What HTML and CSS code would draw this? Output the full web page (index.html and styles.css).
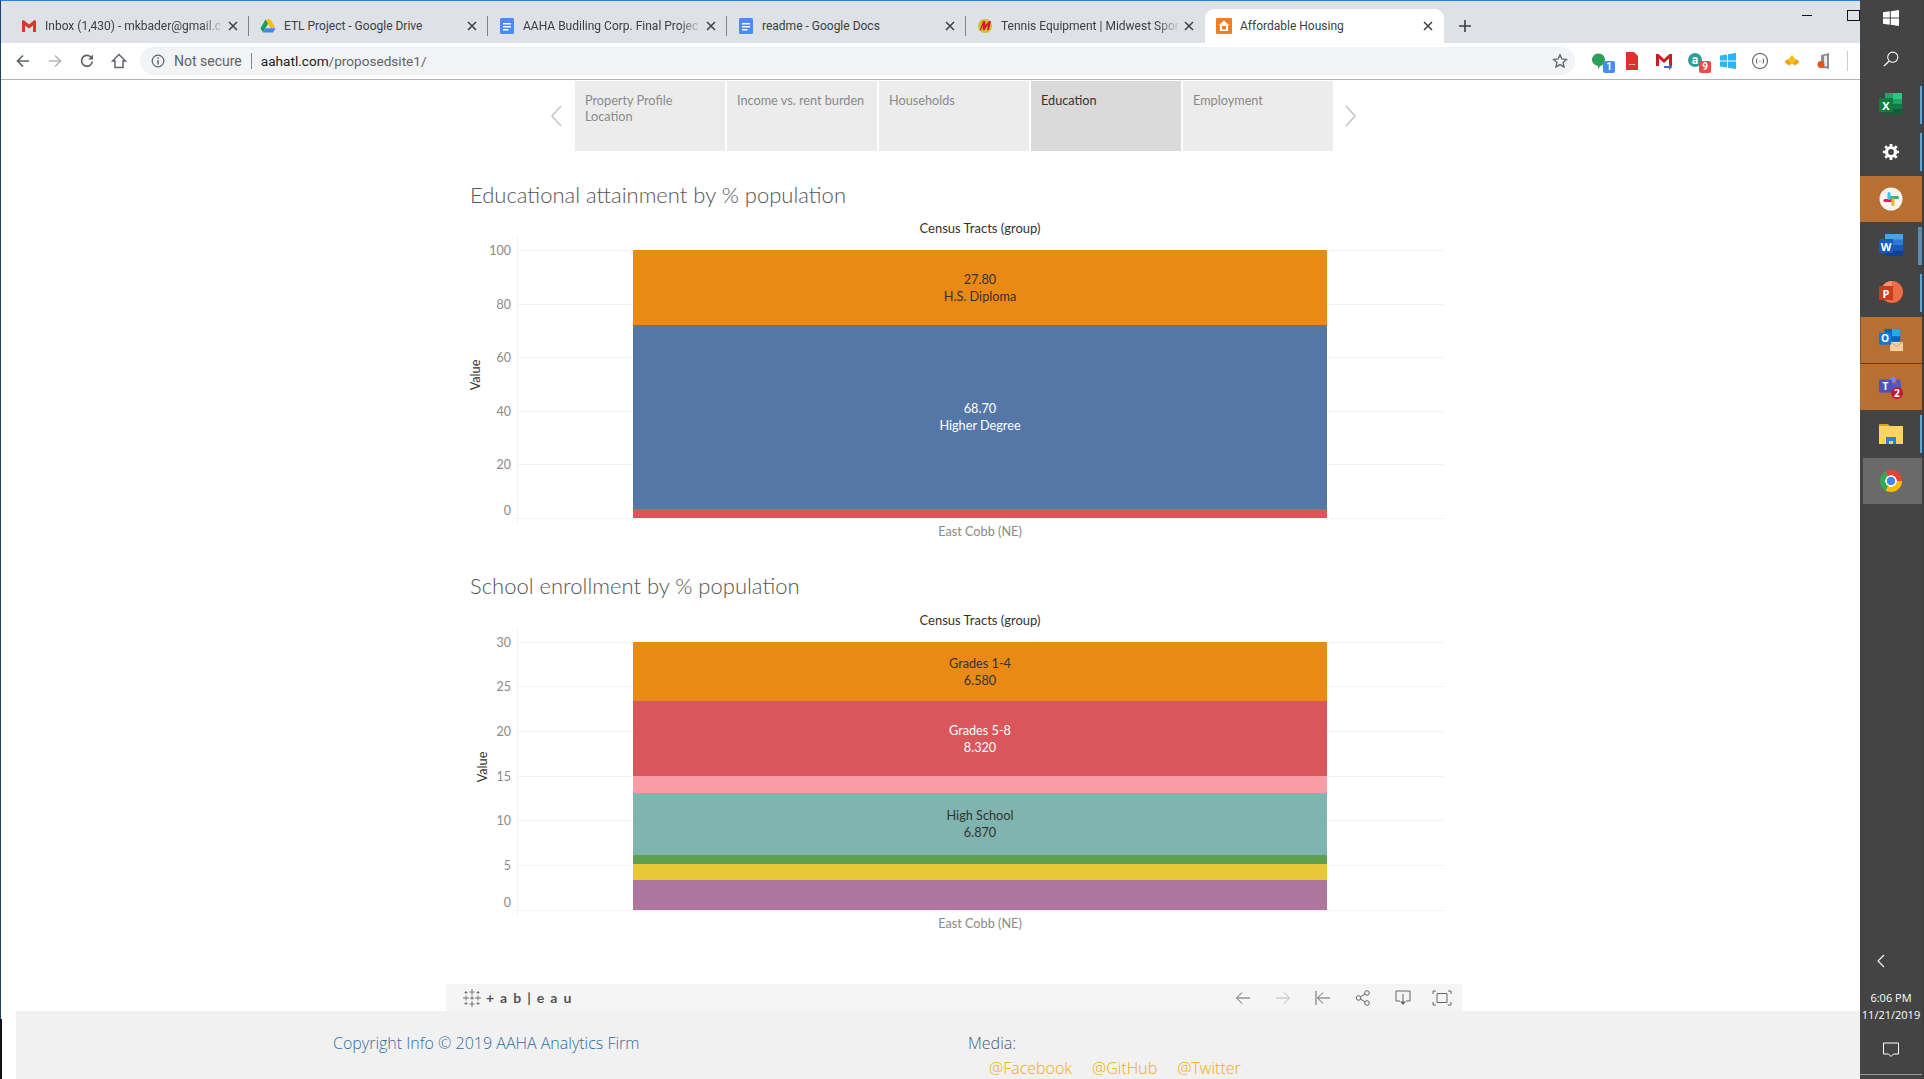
FILE: index.html
```html
<!DOCTYPE html>
<html lang="en">
<head>
    <meta charset="UTF-8">
    <title>Affordable Housing</title>
    <link rel="stylesheet" href="styles.css">
</head>
<body>
<svg class="defs" width="0" height="0">
    <symbol id="x" viewBox="0 0 10 10"><path d="M1 1l8 8M9 1l-8 8" stroke="#3c4043" stroke-width="1.5" fill="none"/></symbol>
    <symbol id="doc" viewBox="0 0 16 16"><rect x="1" width="14" height="16" rx="1.5" fill="#4c8bf5"/><path d="M4 5h8v1.500H4zM4 8h8v1.500H4zM4 11h5.500v1.500H4z" fill="#fff"/></symbol>
</svg>
<div class="screen">
    <div class="browser">
        <!-- tab strip -->
        <div class="tabstrip">
            <div class="tab">
                <svg class="favicon" viewBox="0 0 16 16"><path d="M1 3v11h3V7.500l4 3 4-3V14h3V3l-1.500-1L8 6.500 2.500 2z" fill="#d3392c"/></svg>
                <span class="tab-title tab-fade">Inbox (1,430) - mkbader@gmail.c</span>
                <svg class="tab-x"><use href="#x"/></svg>
            </div>
            <div class="tab">
                <svg class="favicon" viewBox="0 0 16 16"><path d="M5.500 1.500h5l5 8.700h-5z" fill="#fbbc04"/><path d="M5.500 1.500L.5 10.200 3 14.500l5-8.700z" fill="#1a9d5a"/><path d="M3 14.500h10l2.500-4.300h-10z" fill="#4285f4"/></svg>
                <span class="tab-title">ETL Project - Google Drive</span>
                <svg class="tab-x"><use href="#x"/></svg>
            </div>
            <div class="tab">
                <svg class="favicon"><use href="#doc"/></svg>
                <span class="tab-title tab-fade">AAHA Budiling Corp. Final Projec</span>
                <svg class="tab-x"><use href="#x"/></svg>
            </div>
            <div class="tab">
                <svg class="favicon"><use href="#doc"/></svg>
                <span class="tab-title">readme - Google Docs</span>
                <svg class="tab-x"><use href="#x"/></svg>
            </div>
            <div class="tab tab-last">
                <svg class="favicon" viewBox="0 0 16 16"><circle cx="8" cy="8" r="7" fill="#c9c22a"/><path d="M2.500 13L6 3h2l.5 4L12 3h2l-2 9h-2l1-5-3.500 5H6l-.5-4-1.500 4z" fill="#d9172e"/></svg>
                <span class="tab-title tab-fade">Tennis Equipment | Midwest Spor</span>
                <svg class="tab-x"><use href="#x"/></svg>
            </div>
            <div class="tab tab-active">
                <svg class="favicon" viewBox="0 0 16 16"><rect width="16" height="16" rx="1" fill="#f57c1f"/><path d="M8 2.500L2.500 7.500H4V13h8V7.500h1.500z" fill="#fff"/><path d="M6 8h4v3.500H6z" fill="#f57c1f"/></svg>
                <span class="tab-title">Affordable Housing</span>
                <svg class="tab-x"><use href="#x"/></svg>
            </div>
            <svg class="new-tab" viewBox="0 0 12 12"><path d="M6 0v12M0 6h12" stroke="#3c4043" stroke-width="1.600"/></svg>
            <div class="window-btns">
                <span class="win-min"></span>
                <span class="win-max"></span>
            </div>
        </div>

        <!-- toolbar -->
        <div class="toolbar">
            <svg class="nav-btn" viewBox="0 0 16 16"><path d="M14 8H3M8 2.500L2.500 8 8 13.500" stroke="#5f6368" stroke-width="1.700" fill="none"/></svg>
            <svg class="nav-btn" viewBox="0 0 16 16"><path d="M2 8h11M8 2.500L13.500 8 8 13.500" stroke="#b4b7ba" stroke-width="1.700" fill="none"/></svg>
            <svg class="nav-btn" viewBox="0 0 16 16"><path d="M13.300 8.500A5.400 5.400 0 1 1 11.800 4" stroke="#5f6368" stroke-width="1.700" fill="none"/><path d="M14 1.500V6.500H9z" fill="#5f6368"/></svg>
            <svg class="nav-btn" viewBox="0 0 16 16"><path d="M8 1.500L1.500 8H4v6.500h8V8h2.500z" stroke="#5f6368" stroke-width="1.500" fill="none"/></svg>
            <div class="omnibox">
                <svg class="info-icon" viewBox="0 0 14 14"><circle cx="7" cy="7" r="5.800" stroke="#5f6368" stroke-width="1.200" fill="none"/><path d="M6.300 6h1.400v4.500H6.300zM6.300 3.500h1.400v1.400H6.300z" fill="#5f6368"/></svg>
                <span class="not-secure">Not secure</span>
                <span class="omni-sep"></span>
                <span class="url">aahatl.com<span class="url-path">/proposedsite1/</span></span>
                <svg class="star" viewBox="0 0 16 16"><path d="M8 1.800l1.900 4.100 4.500.5-3.300 3 .9 4.500L8 11.600l-4 2.300.9-4.500-3.300-3 4.500-.5z" stroke="#5f6368" stroke-width="1.300" fill="none"/></svg>
            </div>
            <div class="extensions">
                <div class="ext">
                    <svg viewBox="0 0 18 18"><path d="M1 8a6.500 6.500 0 1 1 8 6.300L7 17v-3A6.500 6.500 0 0 1 1 8z" fill="#2e9e5b"/></svg>
                    <span class="badge badge-blue">1</span>
                </div>
                <div class="ext">
                    <svg viewBox="0 0 18 18"><path d="M3 0h8l4 4v14H3z" fill="#e02f2f"/><path d="M6 12h6v1H6z" fill="#f6b6b6"/></svg>
                </div>
                <div class="ext">
                    <svg viewBox="0 0 18 18"><path d="M1 2h16v12H1z" fill="#fff"/><path d="M1 2h2.500L9 7l5.500-5H17v12h-3V6.500L9 11 4 6.500V14H1z" fill="#c91c22"/><path d="M9 14h5v-2l3.500 3-3.500 3v-2H9z" fill="#3d6ec9"/></svg>
                </div>
                <div class="ext">
                    <svg viewBox="0 0 18 18"><circle cx="8" cy="8" r="7" fill="#2aa198"/><text x="8" y="12" class="ext-letter">a</text></svg>
                    <span class="badge badge-red">9</span>
                </div>
                <div class="ext">
                    <svg viewBox="0 0 18 18"><path d="M1 3.500l7-1V8.500H1zM9 2.300l8-1.200V8.500H9zM1 9.500h7v6l-7-1zM9 9.500h8V17l-8-1.200z" fill="#29b6f2"/></svg>
                </div>
                <div class="ext">
                    <svg viewBox="0 0 18 18"><circle cx="9" cy="9" r="7.500" stroke="#5f6368" stroke-width="1.100" fill="none"/><path d="M6 6.500Q4.800 9 6 11.500M12 6.500q1.200 2.500 0 5" stroke="#5f6368" fill="none"/><path d="M8 9h.8v.8H8zM9.600 9h.8v.8h-.8z" fill="#5f6368"/></svg>
                </div>
                <div class="ext">
                    <svg viewBox="0 0 18 18"><path d="M9 3l4 5-4 5-4-5z" fill="#f4c20d"/><path d="M4.500 7L8 11.500l-2 2L1.500 10zM13.500 7L10 11.500l2 2 4.500-3.500z" fill="#f39c12"/></svg>
                </div>
                <div class="ext">
                    <svg viewBox="0 0 18 18"><path d="M6 3l8-2v16l-8-1.500z" fill="#8a8f94"/><path d="M9 4l3-.6v11l-3-.4z" fill="#e8e8e8"/><circle cx="6" cy="12.500" r="3.500" fill="#f0500f"/></svg>
                </div>
            </div>
            <span class="toolbar-sep"></span>
        </div>

        <!-- page -->
        <div class="page">
            <span class="page-edge"></span>
            <div class="story-nav">
                <svg class="story-arrow story-prev" viewBox="0 0 14 24"><path d="M12 2L3 12l9 10" stroke="#c4c4c4" stroke-width="1.500" fill="none"/></svg>
                <div class="story-point">Property Profile<br>Location</div>
                <div class="story-point">Income vs. rent burden</div>
                <div class="story-point">Households</div>
                <div class="story-point story-current">Education</div>
                <div class="story-point">Employment</div>
                <svg class="story-arrow story-next" viewBox="0 0 14 24"><path d="M2 2l9 10-9 10" stroke="#c4c4c4" stroke-width="1.500" fill="none"/></svg>
            </div>

            <section class="chart">
                <h2 class="chart-title">Educational attainment by % population</h2>
                <div class="chart-head">Census Tracts (group)</div>
                <div class="plot">
                    <span class="axis-name">Value</span>
                    <div class="tick" style="top:13px"><span>100</span></div>
                    <div class="tick" style="top:67px"><span>80</span></div>
                    <div class="tick" style="top:120px"><span>60</span></div>
                    <div class="tick" style="top:174px"><span>40</span></div>
                    <div class="tick" style="top:227px"><span>20</span></div>
                    <div class="tick tick-zero" style="top:281px"><span>0</span></div>
                    <div class="stack">
                        <div class="seg seg-orange" style="height:75px"><span>27.80<br>H.S. Diploma</span></div>
                        <div class="seg seg-blue" style="height:184px"><span>68.70<br>Higher Degree</span></div>
                        <div class="seg seg-red" style="height:9px"></div>
                    </div>
                </div>
                <div class="chart-foot">East Cobb (NE)</div>
            </section>

            <section class="chart chart-second">
                <h2 class="chart-title">School enrollment by % population</h2>
                <div class="chart-head">Census Tracts (group)</div>
                <div class="plot">
                    <span class="axis-name axis-name-near">Value</span>
                    <div class="tick" style="top:13px"><span>30</span></div>
                    <div class="tick" style="top:57px"><span>25</span></div>
                    <div class="tick" style="top:102px"><span>20</span></div>
                    <div class="tick" style="top:147px"><span>15</span></div>
                    <div class="tick" style="top:191px"><span>10</span></div>
                    <div class="tick" style="top:236px"><span>5</span></div>
                    <div class="tick tick-zero" style="top:281px"><span>0</span></div>
                    <div class="stack">
                        <div class="seg seg-orange" style="height:59px"><span>Grades 1-4<br>6.580</span></div>
                        <div class="seg seg-red" style="height:75px"><span>Grades 5-8<br>8.320</span></div>
                        <div class="seg seg-pink" style="height:17px"></div>
                        <div class="seg seg-teal" style="height:62px"><span>High School<br>6.870</span></div>
                        <div class="seg seg-green" style="height:9px"></div>
                        <div class="seg seg-yellow" style="height:16px"></div>
                        <div class="seg seg-purple" style="height:30px"></div>
                    </div>
                </div>
                <div class="chart-foot">East Cobb (NE)</div>
            </section>

            <div class="viz-toolbar">
                <svg class="tableau-mark" viewBox="0 0 20 20"><path d="M10 1v6M7.500 4h5M10 13v6M7.500 16h5M1 10h6M4 7.500v5M13 10h6M16 7.500v5M4 3v3M2.500 4.500h3M16 3v3M14.500 4.500h3M4 14v3M2.500 15.500h3M16 14v3M14.500 15.500h3M10 8v4M8 10h4" stroke="#777" fill="none"/></svg>
                <span class="tableau-word">+ab|eau</span>
                <div class="viz-tools">
                    <svg viewBox="0 0 16 14"><path d="M15 7H2M7 1.500L1.500 7 7 12.500" stroke="#666" fill="none"/></svg>
                    <svg viewBox="0 0 16 14"><path d="M1 7h13M9 1.500L14.500 7 9 12.500" stroke="#bbb" fill="none"/></svg>
                    <svg viewBox="0 0 16 14"><path d="M1 0v14M15 7H3M8 1.500L2.500 7 8 12.500" stroke="#666" fill="none"/></svg>
                    <svg viewBox="0 0 16 16"><circle cx="3.500" cy="8" r="2.300" stroke="#666" fill="none"/><circle cx="12" cy="3" r="2.300" stroke="#666" fill="none"/><circle cx="12" cy="13" r="2.300" stroke="#666" fill="none"/><path d="M5.500 6.800l4.500-2.600M5.500 9.200l4.500 2.600" stroke="#666"/></svg>
                    <svg viewBox="0 0 16 16"><path d="M5 11H1V1h14v10h-4M8 4v8" stroke="#666" fill="none"/><path d="M5 11.500h6L8 15z" fill="#666"/></svg>
                    <svg viewBox="0 0 20 16"><path d="M5 3.500h10v9H5z" stroke="#666" fill="none"/><path d="M1 4V1h3M16 1h3v3M19 12v3h-3M4 15H1v-3" stroke="#666" fill="none"/></svg>
                </div>
            </div>

            <footer class="site-footer">
                <div class="copyright">Copyright Info © 2019 AAHA Analytics Firm</div>
                <div class="media">
                    <div class="media-label">Media:</div>
                    <div class="media-links">
                        <a>@Facebook</a>
                        <a>@GitHub</a>
                        <a>@Twitter</a>
                    </div>
                </div>
            </footer>
        </div>
    </div>

    <!-- windows taskbar -->
    <aside class="taskbar">
        <div class="task task-start">
            <svg viewBox="0 0 16 16"><path d="M0 2.300l6.800-1V7.500H0zM7.800 1.200L16 0v7.500H7.800zM0 8.500h6.800v6.200L0 13.700zM7.800 8.500H16V16l-8.200-1.200z" fill="#fff"/></svg>
        </div>
        <div class="task task-search">
            <svg viewBox="0 0 18 18"><circle cx="11" cy="7" r="5.700" stroke="#fff" stroke-width="1.200" fill="none"/><path d="M7 11.200L1 17" stroke="#fff" stroke-width="1.400"/></svg>
        </div>
        <div class="task running">
            <svg viewBox="0 0 24 24"><path d="M6 0h17v22H6z" fill="#21a366"/><path d="M14 0h9v6h-9z" fill="#33c481"/><path d="M14 11h9v6h-9z" fill="#107c41"/><path d="M6 16h17v6H6z" fill="#185c37"/><rect y="5" width="14" height="14" fill="#107c41"/><text x="7" y="16.500" class="office-letter">X</text></svg>
        </div>
        <div class="task running">
            <svg class="task-gear" viewBox="0 0 20 20"><circle cx="10" cy="10" r="5" stroke="#fff" stroke-width="3.600" fill="none"/><path d="M10 1v18M1 10h18M3.600 3.600l12.800 12.800M16.400 3.600L3.600 16.400" stroke="#fff" stroke-width="3" stroke-dasharray="3 12 3"/></svg>
        </div>
        <div class="task task-hot">
            <svg viewBox="0 0 24 24"><circle cx="12" cy="12" r="11.500" fill="#f7f3ee"/><path d="M6 13.500h6" stroke="#e01e5a" stroke-width="3" stroke-linecap="round"/><path d="M10 6.500v5" stroke="#36c5f0" stroke-width="3" stroke-linecap="round"/><path d="M12.500 10.500h6" stroke="#2eb67d" stroke-width="3" stroke-linecap="round"/><path d="M14 12.500v5" stroke="#ecb22e" stroke-width="3" stroke-linecap="round"/></svg>
        </div>
        <div class="task running running-wide">
            <svg viewBox="0 0 24 24"><path d="M6 0h18v22H6z" fill="#2b7cd3"/><path d="M6 0h18v5.500H6z" fill="#41a5ee"/><path d="M6 11h18v5.500H6z" fill="#185abd"/><path d="M6 16.500h18V22H6z" fill="#103f91"/><rect y="5" width="14" height="14" fill="#185abd"/><text x="7" y="16.500" class="office-letter">W</text></svg>
        </div>
        <div class="task running">
            <svg viewBox="0 0 24 24"><circle cx="13" cy="11" r="11" fill="#ed6c47"/><path d="M13 0a11 11 0 0 0-11 11h11z" fill="#ff8f6b"/><rect y="5" width="14" height="14" fill="#c43e1c"/><text x="7" y="16.500" class="office-letter">P</text></svg>
        </div>
        <div class="task task-hot task-split">
            <svg viewBox="0 0 26 26"><path d="M6 1h17v16H6z" fill="#0364b8"/><path d="M14 1h9v8h-9z" fill="#28a8ea"/><path d="M12 15h14v10H12z" fill="#f4cfa0"/><path d="M12 15l7 5 7-5" stroke="#d49c5c" fill="none"/><rect y="5" width="13" height="13" fill="#0f78d4"/><text x="6.500" y="15.500" class="office-letter">O</text></svg>
        </div>
        <div class="task task-hot">
            <svg viewBox="0 0 26 26"><circle cx="15" cy="5" r="3" fill="#7b83eb"/><circle cx="21" cy="7" r="2.500" fill="#5059c9"/><path d="M10 9h14v9H10z" fill="#5059c9"/><rect y="5" width="14" height="14" fill="#4b53bc"/><text x="7" y="16.500" class="office-letter">T</text><circle cx="19.500" cy="19.500" r="6.500" fill="#c4173a"/><text x="19.500" y="23.500" class="office-letter">2</text></svg>
        </div>
        <div class="task running">
            <svg viewBox="0 0 24 20"><path d="M0 0h9l2 2H0z" fill="#d9a320"/><path d="M0 2h24v18H0z" fill="#fcd462"/><path d="M7 13h10v7h-3v-3h-4v3H7z" fill="#1e88d2"/></svg>
        </div>
        <div class="task task-chrome">
            <span class="chrome-logo"></span>
        </div>
        <div class="tray">
            <svg class="tray-chevron" viewBox="0 0 8 14"><path d="M7 1L1 7l6 6" stroke="#fff" stroke-width="1.100" fill="none"/></svg>
            <div class="clock">6:06 PM<br>11/21/2019</div>
            <svg class="tray-note" viewBox="0 0 16 16"><path d="M.5 1h15v11h-5L8 14.500 5.500 12h-5z" stroke="#fff" fill="none"/></svg>
        </div>
    </aside>
</div>
</body>
</html>
```

FILE: styles.css
```css
* {
    box-sizing: border-box;
}
html, body {
    margin: 0;
    height: 100%;
    overflow: hidden;
}
.defs {
    position: absolute;
}
.screen {
    display: flex;
    width: 1924px;
    height: 1079px;
    font-family: Roboto, sans-serif;
}
.browser {
    width: 1860px;
    display: flex;
    flex-direction: column;
    border-top: 1px solid #2b7fd6;
    border-left: 1px solid #1d3f66;
}

/* tabs */
.tabstrip {
    height: 42px;
    flex: none;
    background: #dee1e6;
    display: flex;
    align-items: flex-end;
    padding-left: 9px;
}
.tab {
    width: 239px;
    height: 34px;
    display: flex;
    align-items: center;
    padding: 0 10px 0 11px;
    position: relative;
}
.tab::after {
    content: "";
    position: absolute;
    right: 0;
    top: 7px;
    height: 20px;
    border-right: 1px solid #7f8388;
}
.tab-last::after,
.tab-active::after {
    display: none;
}
.tab-active {
    background: #fff;
    border-radius: 9px 9px 0 0;
}
.favicon {
    width: 16px;
    height: 16px;
    flex: none;
}
.tab-title {
    flex: 1;
    min-width: 0;
    margin-left: 8px;
    font-size: 12px;
    color: #3c4043;
    white-space: nowrap;
    overflow: hidden;
}
.tab-fade {
    margin-right: -4px;
    -webkit-mask-image: linear-gradient(to right, #000 calc(100% - 24px), transparent 100%);
    mask-image: linear-gradient(to right, #000 calc(100% - 24px), transparent 100%);
}
.tab-x {
    width: 10px;
    height: 10px;
    flex: none;
    margin: 0 1px 0 7px;
}
.new-tab {
    width: 12px;
    height: 12px;
    margin: 0 0 11px 15px;
}
.window-btns {
    margin-left: auto;
    align-self: flex-start;
    display: flex;
    align-items: center;
    padding-top: 9px;
}
.win-min {
    width: 10px;
    border-top: 1px solid #111;
    margin-right: 35px;
}
.win-max {
    width: 13px;
    height: 11px;
    border: 1px solid #111;
}

/* toolbar */
.toolbar {
    height: 37px;
    flex: none;
    background: #fff;
    border-bottom: 1px solid #b4b4b4;
    display: flex;
    align-items: center;
    padding: 0 0 1px 14px;
}
.nav-btn {
    width: 16px;
    height: 16px;
    margin-right: 16px;
    flex: none;
}
.omnibox {
    width: 1435px;
    height: 28px;
    margin-left: -3px;
    background: #f1f3f4;
    border-radius: 14px;
    display: flex;
    align-items: center;
    padding: 0 7px 0 11px;
    flex: none;
}
.info-icon {
    width: 14px;
    height: 14px;
}
.not-secure {
    margin-left: 9px;
    font-size: 14px;
    color: #5f6368;
}
.omni-sep {
    height: 16px;
    border-left: 1px solid #80868b;
    margin: 0 9px 0 9px;
}
.url {
    font-size: 13.600px;
    color: #202124;
}
.url-path {
    color: #5f6368;
}
.star {
    width: 16px;
    height: 16px;
    margin-left: auto;
}
.extensions {
    display: flex;
    margin-left: 9px;
}
.ext {
    width: 32px;
    height: 24px;
    display: flex;
    align-items: center;
    justify-content: center;
    position: relative;
}
.ext svg {
    width: 18px;
    height: 18px;
}
.ext-letter {
    font: bold 12px Roboto, sans-serif;
    fill: #fff;
    text-anchor: middle;
}
.badge {
    position: absolute;
    right: 1px;
    bottom: 0;
    width: 12px;
    height: 12px;
    border-radius: 2px;
    color: #fff;
    font-size: 10px;
    font-weight: bold;
    line-height: 12px;
    text-align: center;
}
.badge-blue {
    background: #4c8bf5;
}
.badge-red {
    background: #ea4a4a;
}
.toolbar-sep {
    height: 20px;
    border-left: 1px solid #ccc;
    margin-left: 7px;
}

/* page */
.page {
    flex: 1;
    min-height: 0;
    background: #fff;
    position: relative;
    display: flex;
    flex-direction: column;
    font-family: Lato, sans-serif;
}
.page-edge {
    position: absolute;
    left: -1px;
    bottom: 0;
    width: 2px;
    height: 60px;
    background: #111;
}
.story-nav {
    display: flex;
    align-items: center;
    gap: 2px;
    height: 70px;
    margin-top: 1px;
    padding-left: 548px;
    flex: none;
}
.story-arrow {
    width: 14px;
    height: 24px;
    flex: none;
}
.story-prev {
    margin-right: 10px;
}
.story-next {
    margin-left: 9px;
}
.story-point {
    width: 150px;
    height: 70px;
    padding: 11px 10px 0;
    background: #ececec;
    color: #8a8a8a;
    font-size: 12.700px;
    line-height: 16px;
    white-space: nowrap;
}
.story-current {
    background: #dadada;
    color: #333;
}
.chart {
    flex: none;
    margin-left: 469px;
    width: 974px;
    padding-top: 29px;
}
.chart-second {
    padding-top: 32px;
}
.chart-title {
    margin: 0;
    font-size: 22px;
    font-weight: 300;
    line-height: 30px;
    color: #555;
    white-space: nowrap;
}
.chart-head {
    margin: 11px 0 2px 163px;
    width: 694px;
    text-align: center;
    font-size: 13px;
    line-height: 14px;
    color: #333;
}
.chart-second .chart-head {
    margin-top: 12px;
}
.plot {
    position: relative;
    margin-left: 47px;
    height: 286px;
    padding: 13px 0 0 115px;
    border-left: 1px solid #f2f2f2;
}
.axis-name {
    position: absolute;
    left: -50px;
    top: 138px;
    transform: translateY(-50%) rotate(180deg);
    writing-mode: vertical-rl;
    font-size: 12.700px;
    line-height: 14px;
    color: #333;
}
.axis-name-near {
    left: -43px;
}
.tick {
    position: absolute;
    left: 0;
    right: 0;
    border-top: 1px solid #f2f2f2;
}
.tick span {
    position: absolute;
    right: calc(100% + 7px);
    top: -8px;
    font-size: 12.500px;
    line-height: 16px;
    color: #8a8a8a;
}
.tick-zero {
    left: -5px;
}
.tick-zero span {
    top: -16px;
    right: calc(100% + 2px);
}
.stack {
    position: relative;
    width: 694px;
}
.seg {
    display: flex;
    align-items: center;
    justify-content: center;
    text-align: center;
    font-size: 12.700px;
    line-height: 17px;
    color: #333;
}
.seg-orange { background: #e98a17; }
.seg-blue { background: #5477a7; color: #fff; }
.seg-red { background: #d9565a; color: #fff; }
.seg-pink { background: #f89ca5; }
.seg-teal { background: #7fb4af; }
.seg-green { background: #5fa04e; }
.seg-yellow { background: #e8c736; }
.seg-purple { background: #ae769f; }
.chart-foot {
    margin-left: 163px;
    width: 694px;
    text-align: center;
    font-size: 12.700px;
    line-height: 16px;
    color: #8a8a8a;
}
.viz-toolbar {
    margin: auto 0 0 445px;
    width: 1016px;
    height: 27px;
    background: #f5f5f5;
    display: flex;
    align-items: center;
    padding-left: 16px;
    flex: none;
}
.tableau-mark {
    width: 20px;
    height: 20px;
}
.tableau-word {
    margin-left: 4px;
    font-size: 14px;
    font-weight: bold;
    letter-spacing: 6px;
    color: #555;
    white-space: nowrap;
}
.viz-tools {
    margin-left: auto;
    display: flex;
    align-items: center;
    gap: 24px;
    padding-right: 10px;
}
.viz-tools svg {
    width: 16px;
    height: 16px;
    overflow: visible;
}
.viz-tools svg:last-child {
    width: 20px;
    margin-left: -3px;
}
.site-footer {
    margin-left: 15px;
    height: 68px;
    background: #f1f1f1;
    display: flex;
    padding: 21px 0 0 317px;
    font-family: "Open Sans", sans-serif;
    font-weight: 300;
    font-size: 16px;
    line-height: 22px;
    flex: none;
}
.copyright {
    width: 635px;
    color: #2e6da4;
}
.media-label {
    color: #4a5a80;
}
.media-links {
    display: flex;
    gap: 20px;
    padding: 3px 0 0 21px;
    color: #f0ad00;
}

/* taskbar */
.taskbar {
    width: 64px;
    flex: none;
    background: #444;
    display: flex;
    flex-direction: column;
    gap: 1px;
    border-right: 2px solid #3e3e3e;
    position: relative;
}
.task {
    height: 46px;
    flex: none;
    display: flex;
    align-items: center;
    justify-content: center;
    position: relative;
}
.task svg {
    width: 24px;
    height: 24px;
}
.office-letter {
    font: bold 11px "Open Sans", sans-serif;
    fill: #fff;
    text-anchor: middle;
}
.task-start {
    height: 36px;
}
.task-start svg {
    width: 16px;
    height: 16px;
}
.task-search {
    height: 44px;
}
.task-search svg {
    width: 16px;
    height: 16px;
}
.task .task-gear {
    width: 18px;
    height: 18px;
}
.running::after {
    content: "";
    position: absolute;
    right: 0;
    top: 4px;
    bottom: 4px;
    width: 2px;
    background: #5aa5dc;
}
.running-wide::after {
    width: 4px;
    background: #5b8db3;
}
.task-hot {
    background: #b86f32;
}
.task-split {
    box-shadow: inset 3px 0 0 -2px #8f5525;
}
.task-chrome {
    background: #6a6a6a;
    margin-left: 3px;
    padding-right: 3px;
}
.chrome-logo {
    width: 22px;
    height: 22px;
    border-radius: 50%;
    background:
        radial-gradient(circle, #4285f4 0 4px, #fff 4.500px 5.500px, transparent 6px),
        conic-gradient(#ea4335 0 90deg, #fbbc04 90deg 210deg, #34a853 210deg 330deg, #ea4335 330deg);
}
.tray {
    margin-top: auto;
    height: 138px;
    display: flex;
    flex-direction: column;
    align-items: center;
    color: #fff;
    border-bottom: 1px solid #999;
    margin-bottom: 4px;
}
.tray-chevron {
    width: 8px;
    height: 14px;
    margin-top: 17px;
    margin-right: 20px;
}
.clock {
    margin-top: 21px;
    font-family: "Open Sans", sans-serif;
    font-size: 11px;
    line-height: 17px;
    text-align: center;
    white-space: nowrap;
}
.tray-note {
    width: 16px;
    height: 16px;
    margin-top: 19px;
}
```
